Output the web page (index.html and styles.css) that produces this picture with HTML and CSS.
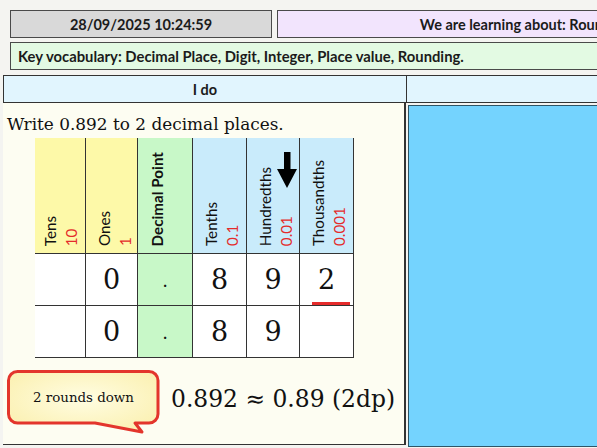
FILE: index.html
```html
<!DOCTYPE html>
<html lang="en">
<head>
<meta charset="utf-8">
<title>Rounding to decimal places</title>
<link rel="stylesheet" href="styles.css">
</head>
<body>
<div class="slide">
  <div class="top-row">
    <div class="box date">28/09/2025 10:24:59</div>
    <div class="box objective">We are learning about: Rounding to decimal places.</div>
  </div>
  <div class="box vocab">Key vocabulary: Decimal Place, Digit, Integer, Place value, Rounding.</div>

  <div class="main">
    <div class="col-head ido">I do</div>
    <div class="col-head wedo"></div>

    <div class="panel left">
      <div class="question">Write 0.892 to 2 decimal places.</div>

      <div class="pv">
        <div class="cell head yellow tens"><div class="vt"><span class="name">Tens</span><span class="val">10</span></div></div>
        <div class="cell head yellow"><div class="vt"><span class="name">Ones</span><span class="val">1</span></div></div>
        <div class="cell head green dp"><div class="vt"><span class="name bold">Decimal Point</span></div></div>
        <div class="cell head blue"><div class="vt"><span class="name">Tenths</span><span class="val">0.1</span></div></div>
        <div class="cell head blue">
          <svg class="arrow" width="20" height="36" viewBox="0 0 20 36"><polygon points="7,0 13.5,0 13.5,17 20,17 10,36 0,17 7,17" fill="#000"/></svg>
          <div class="vt"><span class="name">Hundredths</span><span class="val">0.01</span></div>
        </div>
        <div class="cell head blue"><div class="vt"><span class="name">Thousandths</span><span class="val">0.001</span></div></div>

        <div class="cell num"></div>
        <div class="cell num">0</div>
        <div class="cell num green"><span class="point">.</span></div>
        <div class="cell num">8</div>
        <div class="cell num">9</div>
        <div class="cell num">2<span class="mark"></span></div>

        <div class="cell num"></div>
        <div class="cell num">0</div>
        <div class="cell num green"><span class="point">.</span></div>
        <div class="cell num">8</div>
        <div class="cell num">9</div>
        <div class="cell num"></div>
      </div>

      <div class="result">
        <div class="callout">
          <svg class="bubble" width="155" height="66" viewBox="0 0 155 66">
            <defs>
              <radialGradient id="bg" cx="50%" cy="45%" r="65%">
                <stop offset="0%" stop-color="#fffde2"/>
                <stop offset="100%" stop-color="#fbf0b0"/>
              </radialGradient>
            </defs>
            <path d="M11.5 2.5 H143 A9 9 0 0 1 152 11.5 V45 A9 9 0 0 1 143 54 H129 L136 63 L89 54 H11.5 A9 9 0 0 1 2.5 45 V11.5 A9 9 0 0 1 11.5 2.5 Z" fill="url(#bg)" stroke="#e3352c" stroke-width="3" stroke-linejoin="round"/>
          </svg>
          <div class="callout-text">2 rounds down</div>
        </div>
        <div class="formula">0.892 ≈ 0.89 (2dp)</div>
      </div>
    </div>

    <div class="panel right">
      <div class="blue-board"></div>
    </div>
  </div>
</div>
</body>
</html>
```

FILE: styles.css
```css
html, body {
  margin: 0;
  padding: 0;
  overflow: hidden;
}

body {
  width: 597px;
  height: 448px;
  background: #f4f4f1;
  font-family: Lato, "Open Sans", sans-serif;
  color: #1b1b1b;
}

.slide {
  width: 1000px;
}

.top-row {
  display: flex;
  gap: 5px;
  padding: 10px 0 0 10px;
}

.box {
  height: 28px;
  box-sizing: border-box;
  border: 1px solid #4a4a4a;
  display: flex;
  align-items: center;
  font-weight: 700;
  font-size: 14.5px;
}

.date {
  width: 262px;
  justify-content: center;
  background: #d9d9d9;
}

.objective {
  width: 614px;
  justify-content: center;
  background: #f2e4fd;
}

.vocab {
  margin: 4px 0 0 10px;
  width: 980px;
  background: #e3fae3;
  padding-left: 7px;
  font-size: 14.8px;
}

.main {
  display: grid;
  grid-template-columns: 403px 440px;
  grid-template-rows: 28px 342px;
  margin: 5px 0 0 3px;
}

.col-head {
  box-sizing: border-box;
  border-top: 1px solid #333;
  border-bottom: 1px solid #333;
  background: #e1f5fe;
  display: flex;
  align-items: center;
  justify-content: center;
  font-weight: 700;
  font-size: 14.5px;
}

.ido {
  border-left: 1px solid #333;
}

.wedo {
  border-left: 1px solid #333;
}

.panel {
  box-sizing: border-box;
}

.panel.left {
  background: #fdfdf2;
  border-bottom: 1px solid #333;
  border-right: 2px solid #333;
}

.panel.right {
  padding: 2px 0 0 2px;
}

.blue-board {
  height: 342px;
  box-sizing: border-box;
  border: 1px solid #2f5566;
  background: #74d3fe;
}

.question {
  font-family: "DejaVu Serif", "Liberation Serif", serif;
  font-size: 16.9px;
  line-height: 22px;
  padding: 10px 0 0 4px;
  color: #111;
}

.pv {
  display: grid;
  grid-template-columns: 51px 52px 55px 54px 53px 54px;
  grid-template-rows: 116px 52px 52px;
  margin: 3px 0 0 32px;
  width: max-content;
}

.cell {
  box-sizing: border-box;
  border-right: 1px solid #333;
  border-bottom: 1px solid #333;
  position: relative;
  background: #fff;
}

.cell.yellow { background: #fdf9a8; }
.cell.green { background: #c8f8c8; }
.cell.blue { background: #c9ebfb; }

.cell.head {
  display: flex;
  align-items: flex-end;
  padding: 0 0 7px 8px;
}

.cell.head.tens {
  padding-left: 5px;
}

.cell.head.dp {
  padding-left: 9px;
}

.vt {
  writing-mode: vertical-rl;
  transform: rotate(180deg);
  font-family: Lato, "Open Sans", sans-serif;
  font-size: 15.2px;
  line-height: 21px;
  color: #111;
}

.vt .name,
.vt .val {
  display: block;
}

.vt .val {
  color: #e42b2b;
}

.vt .bold {
  font-weight: 700;
}

.arrow {
  position: absolute;
  left: 30px;
  top: 14px;
}

.cell.num {
  display: flex;
  align-items: center;
  justify-content: center;
  font-family: "DejaVu Serif", "Liberation Serif", serif;
  font-size: 27px;
  color: #111;
}

.point {
  font-size: 18px;
  padding-top: 2px;
}

.mark {
  position: absolute;
  left: 12px;
  right: 3px;
  bottom: 0;
  height: 3px;
  background: #e52b2b;
}

.result {
  display: flex;
  margin: 11px 0 0 3px;
}

.callout {
  display: grid;
  width: 155px;
  height: 66px;
}

.bubble,
.callout-text {
  grid-area: 1 / 1;
}

.callout-text {
  height: 57px;
  display: flex;
  align-items: center;
  justify-content: center;
  font-family: "DejaVu Serif", "Liberation Serif", serif;
  font-size: 13.4px;
  color: #111;
}

.formula {
  margin-left: 10px;
  padding-top: 16px;
  font-family: "DejaVu Serif", "Liberation Serif", serif;
  font-size: 23.4px;
  line-height: 28px;
  color: #111;
}
```
